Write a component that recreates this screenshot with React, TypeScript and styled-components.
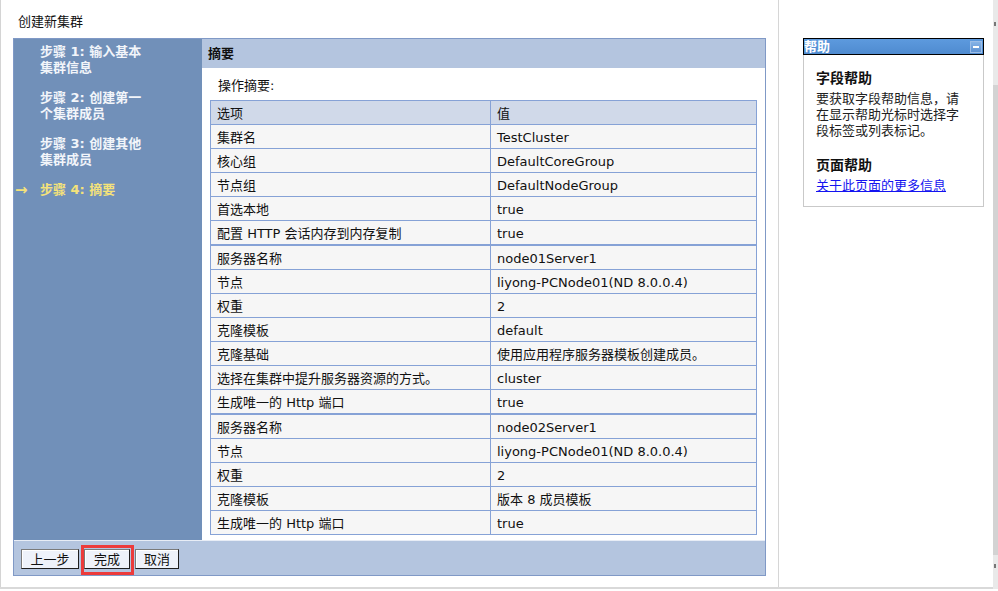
import React from 'react';
import styled, { createGlobalStyle } from 'styled-components';

const GlobalStyle = createGlobalStyle`
  html, body { margin: 0; padding: 0; background: #ffffff; }
  body {
    font-family: "DejaVu Sans", "Noto Sans CJK SC", sans-serif;
    font-size: 13px;
    color: #000;
  }
  * { box-sizing: border-box; }
`;

const Page = styled.div`
  width: 998px;
  height: 591px;
  overflow: hidden;
  background: #fff;
`;

const Frames = styled.div`
  display: flex;
  height: 589px;
  border-bottom: 2px solid #d9d9d9;
`;

const MainFrame = styled.div`
  width: 779px;
  height: 100%;
  border-left: 1px solid #d4d4d4;
  border-right: 1px solid #d6d6d6;
  display: flex;
  flex-direction: column;
`;

const Title = styled.div`
  padding: 14px 0 0 17px;
  line-height: 16px;
  height: 30px;
  color: #111;
`;

const Wizard = styled.div`
  margin-top: 8px;
  margin-left: 12px;
  width: 753px;
  border: 1px solid #8099c6;
  display: flex;
  flex-direction: column;
`;

const WizardBody = styled.div`
  display: flex;
  height: 501px;
`;

const Nav = styled.div`
  width: 188px;
  background: #7190b9;
  padding: 5px 0 0 1px;
  display: flex;
  flex-direction: column;
  gap: 14px;
`;

const Step = styled.div<{ $active?: boolean }>`
  display: flex;
  line-height: 16px;
  font-weight: bold;
  color: ${(p) => (p.$active ? '#f4e27a' : '#f2f5fa')};
`;

const Marker = styled.span`
  width: 25px;
  flex: none;
  font-size: 15px;
  font-weight: bold;
  line-height: 16px;
`;

const Panel = styled.div`
  flex: 1;
  background: #fff;
  display: flex;
  flex-direction: column;
`;

const PanelHeader = styled.div`
  height: 29px;
  line-height: 29px;
  background: #b4c5df;
  padding-left: 6px;
  font-weight: bold;
  color: #111;
`;

const Caption = styled.div`
  margin: 10px 0 6px 16px;
  line-height: 16px;
  color: #111;
`;

const SummaryTable = styled.table`
  margin-left: 8px;
  width: 547px;
  table-layout: fixed;
  border-collapse: separate;
  border-spacing: 0;
  border-top: 1px solid #86a2d6;
  border-left: 1px solid #86a2d6;
`;

const Cell = styled.td<{ $head?: boolean; $groupStart?: boolean; $w?: number }>`
  ${(p) => (p.$w ? `width: ${p.$w}px;` : '')}
  padding: 2px 6px 0;
  line-height: 21px;
  white-space: nowrap;
  overflow: hidden;
  background: ${(p) => (p.$head ? '#d0d9e9' : '#f6f6f6')};
  border-right: 1px solid #86a2d6;
  border-bottom: 1px solid #86a2d6;
  ${(p) => (p.$groupStart ? 'border-top: 1px solid #86a2d6;' : '')}
  color: #111;
  text-align: left;
  font-weight: normal;
`;

const Footer = styled.div`
  height: 35px;
  border-top: 1px solid #e8edf6;
  background: #b4c5df;
  display: flex;
  align-items: flex-start;
  gap: 5px;
  padding: 8px 0 0 7px;
`;

const Button = styled.button<{ $w: number }>`
  width: ${(p) => p.$w}px;
  height: 20px;
  padding: 0;
  font-family: "DejaVu Sans", "Noto Sans CJK SC", sans-serif;
  font-size: 13px;
  line-height: 17px;
  color: #111;
  background: #eef2fa;
  border: 1px solid #7a7a7a;
  border-right-color: #1f1f1f;
  border-bottom-color: #1f1f1f;
  box-shadow: inset 1px 1px 0 #ffffff;
  cursor: pointer;
`;

const Highlight = styled.span`
  position: relative;
  display: inline-flex;
  &::after {
    content: '';
    position: absolute;
    top: -4px;
    left: -3px;
    right: -4px;
    bottom: -6px;
    border: 3px solid #ec3b3b;
    pointer-events: none;
  }
`;

const HelpFrame = styled.div`
  flex: 1;
  padding: 38px 0 0 24px;
`;

const HelpPanel = styled.div`
  width: 181px;
`;

const HelpHead = styled.div`
  height: 17px;
  border: 1px solid #000;
  background: linear-gradient(#5d9ade, #4f8bd0);
  display: flex;
  align-items: center;
  justify-content: space-between;
  color: #fff;
  font-weight: bold;
  line-height: 15px;
`;

const MinButton = styled.span`
  width: 12px;
  height: 12px;
  margin-right: 1px;
  background: linear-gradient(#86b3e6, #5e92d2);
  border: 1px solid #9cbde6;
  display: flex;
  align-items: center;
  justify-content: center;
  &::before {
    content: '';
    width: 6px;
    height: 2px;
    background: #fff;
  }
`;

const HelpBody = styled.div`
  border: 1px solid #c9c9c9;
  border-top: none;
  padding: 14px 18px 12px 12px;
`;

const HelpHeading = styled.div<{ $gap?: number }>`
  font-size: 14px;
  font-weight: bold;
  line-height: 18px;
  margin-top: ${(p) => p.$gap ?? 0}px;
  margin-bottom: 4px;
  color: #111;
`;

const HelpText = styled.div`
  line-height: 16px;
  color: #222;
`;

const HelpLink = styled.a`
  line-height: 16px;
  color: #1414f0;
  text-decoration: underline;
  white-space: nowrap;
`;

const ScrollStrip = styled.div`
  width: 5px;
  height: 589px;
  display: flex;
  flex-direction: column;
  background: #d3d3d3;
`;

const ScrollEnd = styled.div<{ $h: number; $mark: number }>`
  height: ${(p) => p.$h}px;
  background: #e9e9e9;
  position: relative;
  &::after {
    content: '';
    position: absolute;
    left: 1px;
    top: ${(p) => p.$mark}px;
    width: 2px;
    height: 4px;
    background: #777;
  }
`;

const ScrollThumb = styled.div`
  flex: 1;
  background: #d3d3d3;
`;

type Row = [string, string];

const groups: Row[][] = [
  [
    ['集群名', 'TestCluster'],
    ['核心组', 'DefaultCoreGroup'],
    ['节点组', 'DefaultNodeGroup'],
    ['首选本地', 'true'],
    ['配置 HTTP 会话内存到内存复制', 'true'],
  ],
  [
    ['服务器名称', 'node01Server1'],
    ['节点', 'liyong-PCNode01(ND 8.0.0.4)'],
    ['权重', '2'],
    ['克隆模板', 'default'],
    ['克隆基础', '使用应用程序服务器模板创建成员。'],
    ['选择在集群中提升服务器资源的方式。', 'cluster'],
    ['生成唯一的 Http 端口', 'true'],
  ],
  [
    ['服务器名称', 'node02Server1'],
    ['节点', 'liyong-PCNode01(ND 8.0.0.4)'],
    ['权重', '2'],
    ['克隆模板', '版本 8 成员模板'],
    ['生成唯一的 Http 端口', 'true'],
  ],
];

const steps: { lines: string[]; active?: boolean }[] = [
  { lines: ['步骤 1: 输入基本', '集群信息'] },
  { lines: ['步骤 2: 创建第一', '个集群成员'] },
  { lines: ['步骤 3: 创建其他', '集群成员'] },
  { lines: ['步骤 4: 摘要'], active: true },
];

export default function App() {
  return (
    <Page>
      <GlobalStyle />
      <Frames>
        <MainFrame>
          <Title>创建新集群</Title>
          <Wizard>
            <WizardBody>
              <Nav>
                {steps.map((s, i) => (
                  <Step key={i} $active={s.active}>
                    <Marker>{s.active ? '→' : ''}</Marker>
                    <div>
                      {s.lines.map((l, j) => (
                        <div key={j}>{l}</div>
                      ))}
                    </div>
                  </Step>
                ))}
              </Nav>
              <Panel>
                <PanelHeader>摘要</PanelHeader>
                <Caption>操作摘要:</Caption>
                <SummaryTable>
                  <thead>
                    <tr>
                      <Cell as="th" $head $w={280}>
                        选项
                      </Cell>
                      <Cell as="th" $head $w={266}>
                        值
                      </Cell>
                    </tr>
                  </thead>
                  <tbody>
                    {groups.map((g, gi) =>
                      g.map(([k, v], ri) => {
                        const start = gi > 0 && ri === 0;
                        return (
                          <tr key={`${gi}-${ri}`}>
                            <Cell $groupStart={start}>{k}</Cell>
                            <Cell $groupStart={start}>{v}</Cell>
                          </tr>
                        );
                      })
                    )}
                  </tbody>
                </SummaryTable>
              </Panel>
            </WizardBody>
            <Footer>
              <Button $w={58}>上一步</Button>
              <Highlight>
                <Button $w={46}>完成</Button>
              </Highlight>
              <Button $w={44}>取消</Button>
            </Footer>
          </Wizard>
        </MainFrame>
        <HelpFrame>
          <HelpPanel>
            <HelpHead>
              <span>帮助</span>
              <MinButton />
            </HelpHead>
            <HelpBody>
              <HelpHeading>字段帮助</HelpHeading>
              <HelpText>要获取字段帮助信息，请在显示帮助光标时选择字段标签或列表标记。</HelpText>
              <HelpHeading $gap={17}>页面帮助</HelpHeading>
              <HelpLink href="#">关于此页面的更多信息</HelpLink>
            </HelpBody>
          </HelpPanel>
        </HelpFrame>
        <ScrollStrip>
          <ScrollEnd $h={85} $mark={22} />
          <ScrollThumb />
          <ScrollEnd $h={34} $mark={9} />
        </ScrollStrip>
      </Frames>
    </Page>
  );
}
